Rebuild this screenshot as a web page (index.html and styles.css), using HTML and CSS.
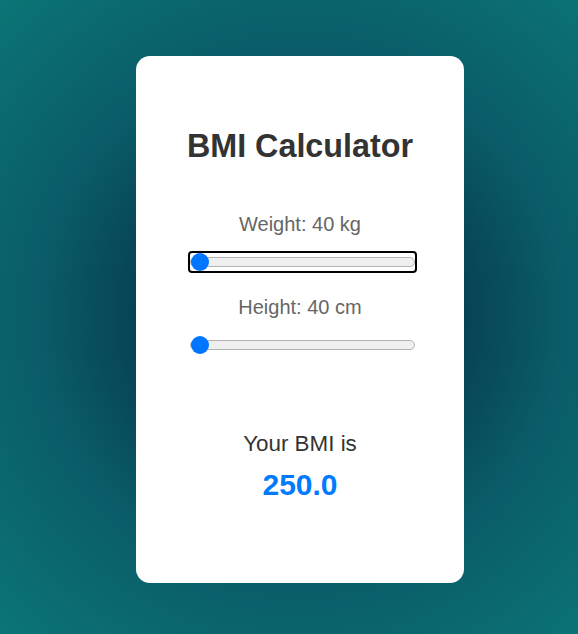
FILE: index.html
```html
<!DOCTYPE html>
<html>
<head>
<meta charset="utf-8">
<link rel="stylesheet" href="styles.css">
</head>
<body>
<div class="card">
  <h1 class="title">BMI Calculator</h1>
  <div class="field">
    <label class="label" for="w">Weight: 40 kg</label>
    <input class="range" id="w" type="range" min="40" max="200" value="40">
  </div>
  <div class="field field-second">
    <label class="label" for="h">Height: 40 cm</label>
    <input class="range" id="h" type="range" min="40" max="220" value="40">
  </div>
  <div class="result">
    <p class="result-label">Your BMI is</p>
    <p class="result-value">250.0</p>
  </div>
</div>
<script>document.getElementById('w').focus();</script>
</body>
</html>
```

FILE: styles.css
```css
html, body {
  margin: 0;
  height: 100%;
}
body {
  font-family: "Liberation Sans", Arial, sans-serif;
  background: radial-gradient(circle at 300px 315px, #03213a 0%, #063a4f 30%, #0a5c68 60%, #0b7576 100%);
  box-sizing: border-box;
  padding: 56px 0 0 136px;
}
.card {
  width: 328px;
  height: 527px;
  box-sizing: border-box;
  background: #fff;
  border-radius: 14px;
  padding: 40px 40px;
  display: flex;
  flex-direction: column;
  align-items: center;
  text-align: center;
}
.title {
  font-size: 32.3px;
  font-weight: bold;
  color: #333;
  margin: 32px 0 48px;
  line-height: 37px;
}
.field {
  display: flex;
  flex-direction: column;
  align-items: center;
  width: 100%;
}
.field-second {
  margin-top: 25px;
}
.label {
  font-size: 20px;
  color: #666;
  line-height: 23px;
  margin-bottom: 17px;
}
.range {
  -webkit-appearance: none;
  appearance: none;
  width: 225px;
  height: 18px;
  margin: 0 0 0 5px;
  padding: 0;
  background: transparent;
  border-radius: 2px;
}
.range::-webkit-slider-runnable-track {
  height: 10px;
  box-sizing: border-box;
  border: 1px solid #b3b3b3;
  border-radius: 5px;
  background: #efefef;
}
.range::-webkit-slider-thumb {
  -webkit-appearance: none;
  appearance: none;
  width: 18px;
  height: 18px;
  border-radius: 50%;
  background: #0075ff;
  border: none;
  margin-top: -5px;
}
.range:focus {
  outline: 2px solid #000;
  outline-offset: 0;
}
.result {
  margin-top: 77px;
}
.result-label {
  font-size: 22.4px;
  color: #333;
  margin: 0 0 12px;
  line-height: 25px;
}
.result-value {
  font-size: 30px;
  font-weight: bold;
  color: #007bff;
  margin: 0;
  line-height: 34px;
}
```
